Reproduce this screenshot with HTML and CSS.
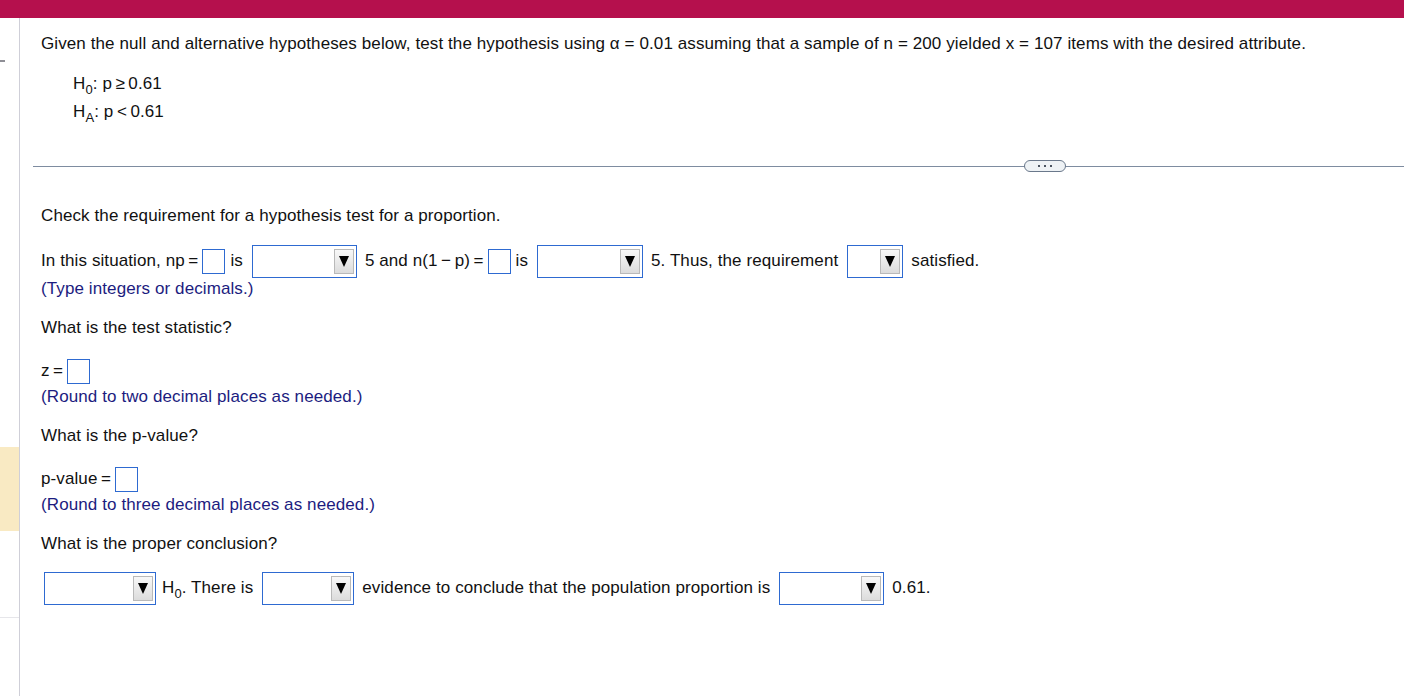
FILE: index.html
```html
<!DOCTYPE html>
<html>
<head>
<meta charset="utf-8">
<link rel="stylesheet" href="styles.css">
</head>
<body>
<div class="topbar"></div>
<div class="layout">
  <div class="rail">
    <div class="rail-dash"></div>
    <div class="rail-mark"></div>
    <div class="rail-rule"></div>
  </div>
  <div class="main">
    <div class="line given">Given the null and alternative hypotheses below, test the hypothesis using α = 0.01 assuming that a sample of n = 200 yielded x = 107 items with the desired attribute.</div>
    <div class="hyps">
      <div class="hyp">H<sub>0</sub>: p&#8201;≥&#8201;0.61</div>
      <div class="hyp">H<sub>A</sub>: p&#8201;&lt;&#8201;0.61</div>
    </div>
    <div class="divider"><span class="pill"><i></i><i></i><i></i></span></div>

    <div class="line q-check">Check the requirement for a hypothesis test for a proportion.</div>
    <div class="row row-req">
      <span>In this situation, np&#8201;=</span>
      <span class="box"></span>
      <span>is</span>
      <span class="sel w105"><span class="btn"><span class="tri"></span></span></span>
      <span>5 and n(1&#8201;−&#8201;p)&#8201;=</span>
      <span class="box"></span>
      <span>is</span>
      <span class="sel w106"><span class="btn"><span class="tri"></span></span></span>
      <span>5. Thus, the requirement</span>
      <span class="sel w56"><span class="btn"><span class="tri"></span></span></span>
      <span>satisfied.</span>
    </div>
    <div class="line hint">(Type integers or decimals.)</div>

    <div class="line q">What is the test statistic?</div>
    <div class="row row-ans">
      <span>z&#8201;=</span>
      <span class="box"></span>
    </div>
    <div class="line hint tight">(Round to two decimal places as needed.)</div>

    <div class="line q">What is the p-value?</div>
    <div class="row row-ans">
      <span>p-value&#8201;=</span>
      <span class="box"></span>
    </div>
    <div class="line hint tight">(Round to three decimal places as needed.)</div>

    <div class="line q">What is the proper conclusion?</div>
    <div class="row row-concl">
      <span class="sel w112 first"><span class="btn"><span class="tri"></span></span></span>
      <span>H<sub>0</sub>. There is</span>
      <span class="sel w92"><span class="btn"><span class="tri"></span></span></span>
      <span>evidence to conclude that the population proportion is</span>
      <span class="sel w105"><span class="btn"><span class="tri"></span></span></span>
      <span>0.61.</span>
    </div>
  </div>
</div>
</body>
</html>
```

FILE: styles.css
```css
html, body {
  margin: 0;
  padding: 0;
  background: #ffffff;
}
body {
  font-family: "Liberation Sans", Arial, sans-serif;
  font-size: 17px;
  letter-spacing: 0.1px;
  color: #111111;
  width: 1404px;
  height: 696px;
  overflow: hidden;
}
.topbar {
  height: 18px;
  background: #b5104d;
}
.layout {
  display: flex;
  height: 678px;
}
.rail {
  width: 19px;
  flex: none;
  border-right: 1px solid #cfcfd8;
  display: flex;
  flex-direction: column;
}
.rail-dash {
  margin-top: 42px;
  width: 5px;
  height: 2px;
  background: #8f8f96;
}
.rail-mark {
  margin-top: 385px;
  height: 84px;
  background: #f9eac3;
}
.rail-rule {
  margin-top: 86px;
  height: 1px;
  background: #e6e6ea;
}
.main {
  flex: 1;
  padding: 16px 0 0 21px;
  position: relative;
}
.line {
  line-height: 20px;
  white-space: nowrap;
}
.given {
  margin: 0;
}
.hyps {
  margin-top: 16px;
  padding-left: 32px;
}
.hyp {
  line-height: 28px;
}
sub {
  font-size: 13px;
  vertical-align: -5px;
  line-height: 0;
}
.divider {
  margin: 40px 0 0 -8px;
  height: 1px;
  background: #7e8ca0;
  position: relative;
}
.pill {
  position: absolute;
  left: 991px;
  top: -6px;
  width: 40px;
  height: 10px;
  border: 1.5px solid #6a788b;
  border-radius: 6px;
  background: #eef2f5;
  display: flex;
  align-items: center;
  justify-content: center;
  gap: 4px;
}
.pill i {
  display: block;
  width: 2px;
  height: 2px;
  background: #4a5360;
}
.q-check {
  margin-top: 39px;
}
.row {
  display: flex;
  align-items: center;
  white-space: nowrap;
}
.row-req {
  margin-top: 18px;
  height: 34px;
}
.hint {
  color: #1c1c80;
}
.row-req + .hint {
  margin-top: 1px;
}
.q {
  margin-top: 19px;
}
.row-ans {
  margin-top: 20px;
  height: 26px;
}
.tight {
  margin-top: 3px;
}
.row-concl {
  margin-top: 17px;
  height: 34px;
}
.box {
  display: inline-block;
  width: 21px;
  height: 23px;
  border: 1px solid #2e6ad1;
  margin: 0 5px 0 4px;
  background: #fff;
}
.sel {
  display: inline-flex;
  justify-content: flex-end;
  align-items: center;
  height: 31px;
  border: 1px solid #2e6ad1;
  margin: 0 8px 0 9px;
  padding-right: 2px;
  box-sizing: content-box;
  background: #fff;
}
.sel.first {
  margin-left: 3px;
  margin-right: 6px;
}
.w105 { width: 101px; }
.w106 { width: 102px; }
.w56 { width: 52px; }
.w112 { width: 108px; }
.w92 { width: 88px; }
.btn {
  width: 18px;
  height: 23px;
  border: 1px solid #b9b9b9;
  background: linear-gradient(#f8f8f8, #dcdcdc);
  display: flex;
  align-items: center;
  justify-content: center;
}
.tri {
  width: 0;
  height: 0;
  border-left: 5.5px solid transparent;
  border-right: 5.5px solid transparent;
  border-top: 11px solid #000;
}
```
